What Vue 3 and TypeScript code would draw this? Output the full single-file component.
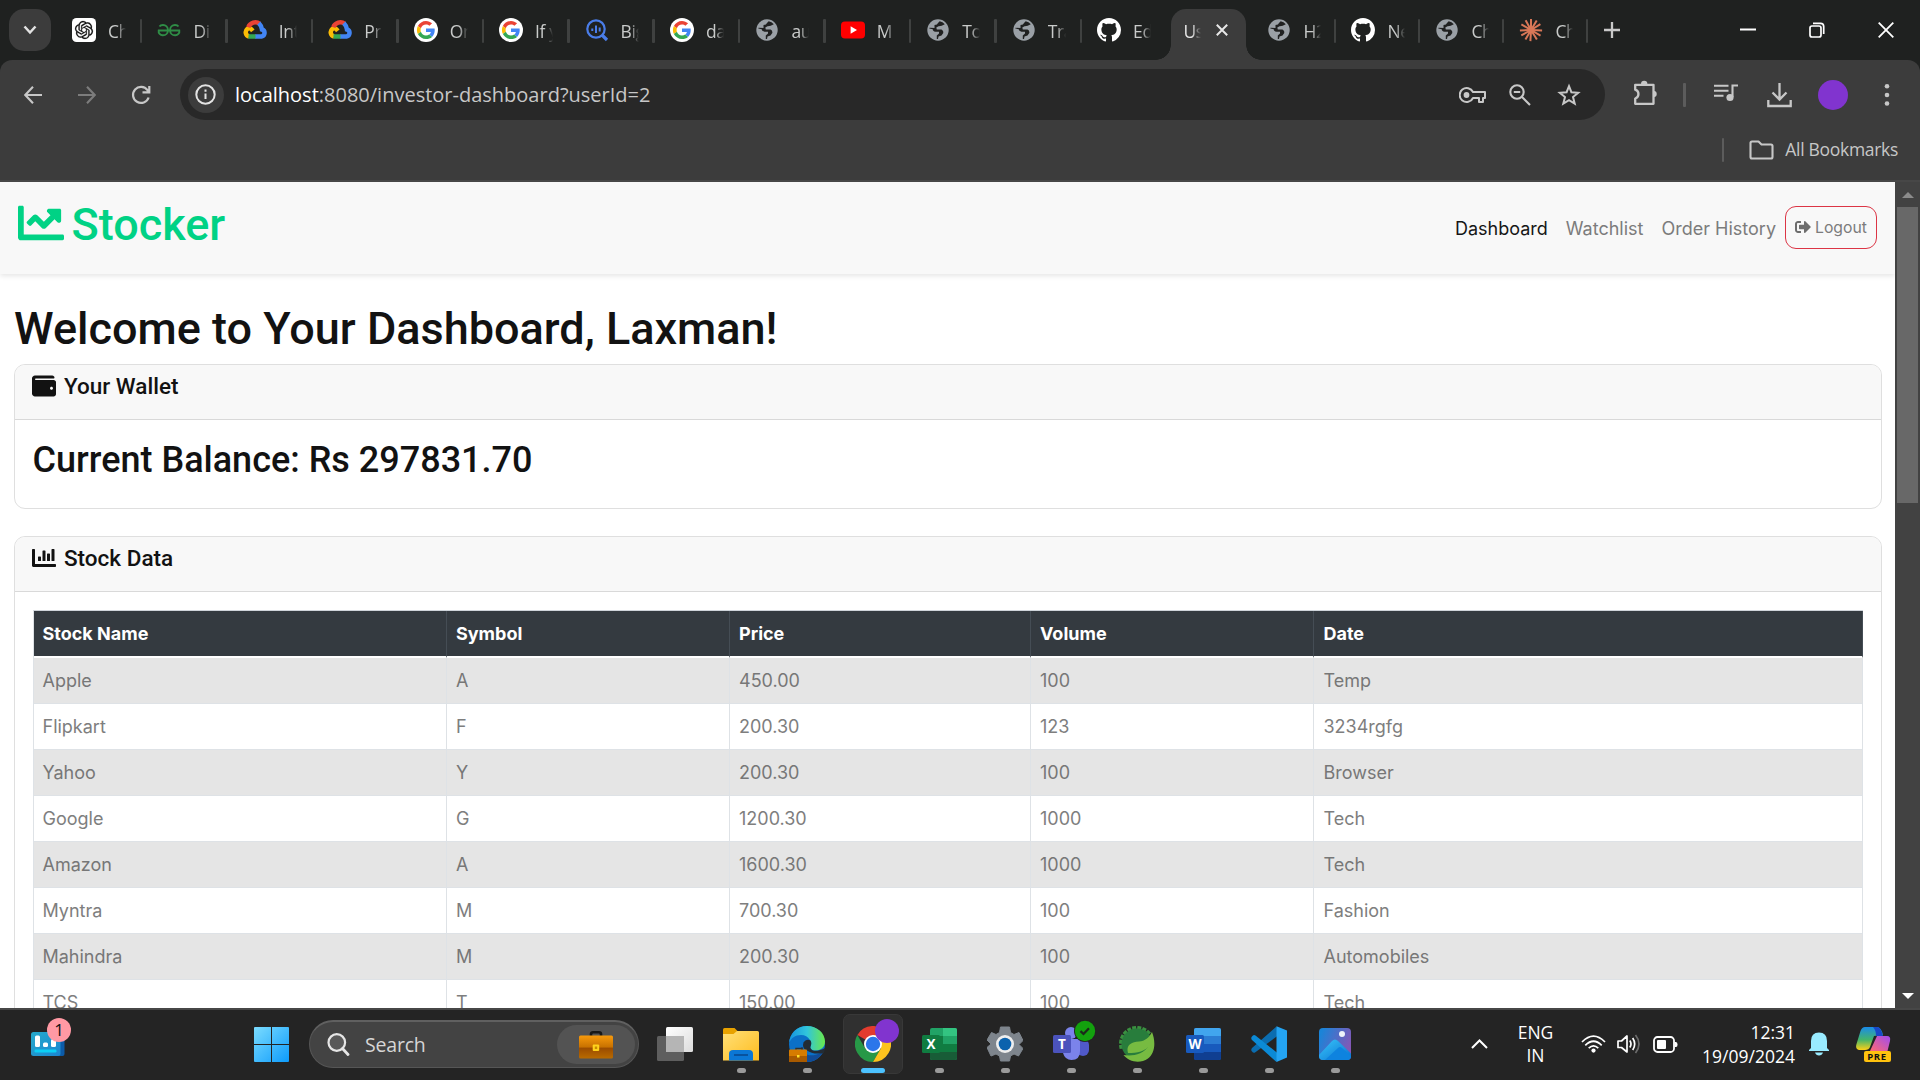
<script setup lang="ts">
interface Tab { icon: string; label: string; sep: boolean; active?: boolean; narrow?: boolean }
interface Stock { name: string; symbol: string; price: string; volume: string; date: string }

const tabs: Tab[] = [
  { icon: 'openai', label: 'Ch', sep: true },
  { icon: 'gfg', label: 'Di', sep: true },
  { icon: 'cloud', label: 'Int', sep: true },
  { icon: 'cloud', label: 'Pr', sep: true },
  { icon: 'google', label: 'On', sep: true },
  { icon: 'google', label: 'If y', sep: true },
  { icon: 'bigquery', label: 'Big', sep: true },
  { icon: 'google', label: 'da', sep: true },
  { icon: 'globe', label: 'au', sep: true },
  { icon: 'youtube', label: 'M', sep: true },
  { icon: 'globe', label: 'To', sep: true },
  { icon: 'globe', label: 'Tra', sep: true },
  { icon: 'github', label: 'Ed', sep: false },
  { icon: '', label: 'Us', sep: false, active: true },
  { icon: 'globe', label: 'H2', sep: true, narrow: true },
  { icon: 'github', label: 'Ne', sep: true, narrow: true },
  { icon: 'globe', label: 'Ch', sep: true, narrow: true },
  { icon: 'claude', label: 'Ch', sep: true, narrow: true },
]

const columns: string[] = ['Stock Name', 'Symbol', 'Price', 'Volume', 'Date']

const stocks: Stock[] = [
  { name: 'Apple', symbol: 'A', price: '450.00', volume: '100', date: 'Temp' },
  { name: 'Flipkart', symbol: 'F', price: '200.30', volume: '123', date: '3234rgfg' },
  { name: 'Yahoo', symbol: 'Y', price: '200.30', volume: '100', date: 'Browser' },
  { name: 'Google', symbol: 'G', price: '1200.30', volume: '1000', date: 'Tech' },
  { name: 'Amazon', symbol: 'A', price: '1600.30', volume: '1000', date: 'Tech' },
  { name: 'Myntra', symbol: 'M', price: '700.30', volume: '100', date: 'Fashion' },
  { name: 'Mahindra', symbol: 'M', price: '200.30', volume: '100', date: 'Automobiles' },
  { name: 'TCS', symbol: 'T', price: '150.00', volume: '100', date: 'Tech' },
]

const apps: string[] = ['taskview', 'explorer', 'edge', 'chrome', 'excel', 'settings', 'teams', 'spring', 'word', 'vscode', 'photos']
const rays: number[] = [0, 31, 58, 92, 121, 148, 183, 210, 241, 268, 300, 331]
const springTeeth: number[] = [170, 188, 206, 224, 242, 260, 278, 296, 314]
</script>

<template>
  <div class="screen">
    <header class="tabstrip">
      <div class="tab-search">
        <svg width="14" height="10" viewBox="0 0 14 10"><path d="M1.5 1.5 7 7.5 12.500 1.500" fill="none" stroke="#e3e3e3" stroke-width="2.500" /></svg>
      </div>
      <div v-for="(t, i) in tabs" :key="i" class="tab" :class="{ active: t.active, narrow: t.narrow, sep: t.sep }">
        <svg v-if="t.icon === 'openai'" class="fav" viewBox="0 0 24 24"><rect width="24" height="24" rx="4.500" fill="#fff" /><path transform="translate(3 3) scale(.75)" fill="#111" stroke="#111" stroke-width=".3" d="M22.2819 9.8211a5.9847 5.9847 0 0 0-.5157-4.9108 6.0462 6.0462 0 0 0-6.5098-2.9A6.0651 6.0651 0 0 0 4.9807 4.1818a5.9847 5.9847 0 0 0-3.9977 2.9 6.0462 6.0462 0 0 0 .7427 7.0966 5.98 5.98 0 0 0 .511 4.9107 6.051 6.051 0 0 0 6.5146 2.9001A5.9847 5.9847 0 0 0 13.2599 24a6.0557 6.0557 0 0 0 5.7718-4.2058 5.9894 5.9894 0 0 0 3.9977-2.9001 6.0557 6.0557 0 0 0-.7475-7.0729zm-9.022 12.6081a4.4755 4.4755 0 0 1-2.8764-1.0408l.1419-.0804 4.7783-2.7582a.7948.7948 0 0 0 .3927-.6813v-6.7369l2.02 1.1686a.071.071 0 0 1 .038.052v5.5826a4.504 4.504 0 0 1-4.4945 4.4944zm-9.6607-4.1254a4.4708 4.4708 0 0 1-.5346-3.0137l.142.0852 4.783 2.7582a.7712.7712 0 0 0 .7806 0l5.8428-3.3685v2.3324a.0804.0804 0 0 1-.0332.0615L9.74 19.9502a4.4992 4.4992 0 0 1-6.1408-1.6464zM2.3408 7.8956a4.485 4.485 0 0 1 2.3655-1.9728V11.6a.7664.7664 0 0 0 .3879.6765l5.8144 3.3543-2.0201 1.1685a.0757.0757 0 0 1-.071 0l-4.8303-2.7865A4.504 4.504 0 0 1 2.3408 7.872zm16.5963 3.8558L13.1038 8.364 15.1192 7.2a.0757.0757 0 0 1 .071 0l4.8303 2.7913a4.4944 4.4944 0 0 1-.6765 8.1042v-5.6772a.79.79 0 0 0-.407-.667zm2.0107-3.0231l-.142-.0852-4.7735-2.7818a.7759.7759 0 0 0-.7854 0L9.409 9.2297V6.8974a.0662.0662 0 0 1 .0284-.0615l4.8303-2.7866a4.4992 4.4992 0 0 1 6.6802 4.66zM8.3065 12.863l-2.02-1.1638a.0804.0804 0 0 1-.038-.0567V6.0742a4.4992 4.4992 0 0 1 7.3757-3.4537l-.142.0805L8.704 5.459a.7948.7948 0 0 0-.3927.6813zm1.0976-2.3654l2.602-1.4998 2.6069 1.4998v2.9994l-2.5974 1.4997-2.6067-1.4997Z" /></svg>
        <svg v-else-if="t.icon === 'gfg'" class="fav" viewBox="0 0 24 24" fill="none" stroke="#2f8d46" stroke-width="1.900"><path d="M2.500 8.500Q3.500 7 6 7a4.800 5 0 0 1 0 10.300 4 4 0 0 1-4.300-4.800H22.300A4 4 0 0 1 18 17.300 4.800 5 0 0 1 18 7Q20.500 7 21.500 8.500" /></svg>
        <svg v-else-if="t.icon === 'cloud'" class="fav" viewBox="0 0 24 24" fill="none" stroke-width="4.500"><path d="M6 18.500A4.300 4.300 0 0 1 4.300 11Q7 9 9.800 12.800" stroke="#fbbc04" /><path d="M5.300 9.200A7.500 7.500 0 0 1 16.800 5.800" stroke="#ea4335" /><path d="M15.800 5.200Q18.700 8 19 11.500A3.600 3.600 0 0 1 18.500 18.500H12" stroke="#4285f4" /><path d="M12.500 18.500H5.500" stroke="#34a853" /></svg>
        <svg v-else-if="t.icon === 'google'" class="fav" viewBox="0 0 24 24"><circle cx="12" cy="12" r="12" fill="#fff" /><g transform="translate(2.900 2.900) scale(.379)"><path fill="#EA4335" d="M24 9.500c3.540 0 6.710 1.220 9.210 3.600l6.850-6.850C35.900 2.380 30.470 0 24 0 14.620 0 6.510 5.380 2.560 13.220l7.980 6.190C12.430 13.720 17.740 9.500 24 9.500z" /><path fill="#4285F4" d="M46.980 24.550c0-1.570-.15-3.090-.38-4.550H24v9.020h12.940c-.58 2.960-2.260 5.480-4.780 7.180l7.730 6c4.510-4.180 7.090-10.360 7.090-17.650z" /><path fill="#FBBC05" d="M10.530 28.590c-.48-1.450-.76-2.990-.76-4.590s.27-3.140.76-4.590l-7.980-6.190C.92 16.460 0 20.120 0 24c0 3.880.92 7.540 2.560 10.780l7.970-6.190z" /><path fill="#34A853" d="M24 48c6.480 0 11.930-2.130 15.890-5.810l-7.730-6c-2.150 1.450-4.920 2.300-8.160 2.300-6.260 0-11.570-4.220-13.470-9.910l-7.980 6.190C6.510 42.620 14.620 48 24 48z" /></g></svg>
        <svg v-else-if="t.icon === 'bigquery'" class="fav" viewBox="0 0 24 24" fill="none" stroke="#4a7de8"><circle cx="11" cy="11" r="8.700" stroke-width="2.200" /><path d="M17 17 22 22" stroke-width="3.200" /><path d="M7.300 10.500V13M11 7.500V15M14.700 9.500V13.500" stroke-width="2" /></svg>
        <svg v-else-if="t.icon === 'globe'" class="fav" viewBox="0 0 24 24"><circle cx="12" cy="12" r="10.700" fill="#9aa0a6" /><path d="M13.800 3.300 13.800 6.300Q13.500 7.800 11.500 7.800H9.700V10Q9.700 11.500 8.300 11.700H13Q14.800 11.700 14.800 13.500V15.500Q14.500 16.800 13 16.900 11.300 17 11.300 18.500V20.900C6 20.500 3.200 16.500 3.100 12.700L7.300 16.300H10.500L11.500 14 5.500 11.500 3.600 9.500" fill="none" /><path d="M13.700 3.300A9 9 0 0 1 18.800 6.200Q15.500 8.300 12.500 8.200L10.300 9.500 10.800 11.500H15.500Q17.800 12.500 17.300 15L15.500 17.500 12.500 18.500 12 20.900H10.800V17.500L13 15.500V13.800H9.500Q6.500 13 6.800 11.200L3.300 10.500A9 9 0 0 1 3.500 9.800L8.500 10 8.500 7Q11.500 7 12 5Z" fill="#202121" /><path d="M3.300 13.500Q5.500 14 6.500 16.500L9.500 17.500V20.600A9 9 0 0 1 3.300 13.500Z" fill="#9aa0a6" /></svg>
        <svg v-else-if="t.icon === 'youtube'" class="fav" viewBox="0 0 24 24"><rect y="3.500" width="24" height="17" rx="4" fill="#f00" /><path d="M9.600 8.300V15.700L16 12Z" fill="#fff" /></svg>
        <svg v-else-if="t.icon === 'github'" class="fav" viewBox="0 0 16 16"><path fill="#fff" d="M8 0C3.580 0 0 3.580 0 8c0 3.540 2.290 6.530 5.470 7.590.4.070.55-.17.55-.38 0-.19-.01-.82-.01-1.490-2.010.37-2.530-.49-2.690-.94-.09-.23-.48-.94-.82-1.130-.28-.15-.68-.52-.01-.53.63-.01 1.080.58 1.230.82.72 1.210 1.870.87 2.330.66.07-.52.28-.87.51-1.070-1.780-.2-3.640-.89-3.640-3.950 0-.87.31-1.590.82-2.150-.08-.2-.36-1.020.08-2.120 0 0 .67-.21 2.200.82.640-.18 1.320-.27 2-.27s1.360.09 2 .27c1.530-1.040 2.200-.82 2.200-.82.44 1.100.16 1.920.08 2.120.51.56.82 1.270.82 2.150 0 3.070-1.870 3.750-3.650 3.950.29.25.54.73.54 1.480 0 1.070-.01 1.930-.01 2.200 0 .21.15.46.55.38A8.010 8.010 0 0 0 16 8c0-4.420-3.580-8-8-8z" /></svg>
        <svg v-else-if="t.icon === 'claude'" class="fav" viewBox="0 0 24 24"><path v-for="r in rays" :key="r" d="M12 12V.900" :transform="`rotate(${r} 12 12)`" stroke="#d97757" stroke-width="2" /><circle cx="12" cy="12" r="3.500" fill="#d97757" /></svg>
        <span class="tab-label">{{ t.label }}</span>
        <svg v-if="t.active" class="tab-close" viewBox="0 0 12 12"><path d="M.800.800 11.200 11.200M11.200.800.800 11.200" stroke="#e8e8e8" stroke-width="2" /></svg>
      </div>
      <svg class="new-tab" viewBox="0 0 16 16"><path d="M8 0V16M0 8H16" stroke="#c9c9c9" stroke-width="2.300" /></svg>
      <div class="win-controls">
        <svg width="16" height="16" viewBox="0 0 16 16"><path d="M0 7.500H16" stroke="#fff" stroke-width="2" /></svg>
        <svg width="16" height="16" viewBox="0 0 16 16" fill="none" stroke="#fff" stroke-width="1.700"><rect x="1" y="4" width="11" height="11" rx="2" /><path d="M4 1.300H11.500Q14.700 1.300 14.700 4.500V12" /></svg>
        <svg width="16" height="16" viewBox="0 0 16 16"><path d="M.700.700 15.300 15.300M15.300.700.700 15.300" stroke="#fff" stroke-width="1.800" /></svg>
      </div>
    </header>

    <section class="chrome-bars">
      <div class="toolbar">
        <svg class="back" width="18" height="18" viewBox="0 0 18 18" fill="none" stroke="#c7c7c7" stroke-width="2.100"><path d="M18 9H1.500M9 .800 1.300 9 9 17.200" /></svg>
        <svg class="forward" width="18" height="18" viewBox="0 0 18 18" fill="none" stroke="#7c7c7c" stroke-width="2.100"><path d="M0 9H16.500M9 .800 16.700 9 9 17.200" /></svg>
        <svg class="reload" width="20" height="20" viewBox="0 0 20 20" fill="none" stroke="#c7c7c7" stroke-width="2.200"><path d="M17.600 12.500A8 8 0 1 1 16.500 5.200L18 7M18.300 1V7.400H11.500" /></svg>
        <div class="omnibox">
          <div class="info"><svg width="21" height="21" viewBox="0 0 21 21" fill="none" stroke="#e3e3e3" stroke-width="2"><circle cx="10.500" cy="10.500" r="9.200" /><path d="M10.500 9.500V15M10.500 5.500V7.700" /></svg></div>
          <span class="url"><b>localhost</b>:8080/investor-dashboard?userId=2</span>
          <svg class="key" width="27" height="18" viewBox="0 0 27 18" fill="none" stroke="#c7c7c7" stroke-width="2"><path d="M14 6H26V12H24V16H20V12H14A7 7 0 1 1 14 6Z" stroke-linejoin="round" /><circle cx="7.500" cy="9" r="2.900" fill="#c7c7c7" stroke="none" /></svg>
          <svg class="lens" width="22" height="22" viewBox="0 0 22 22" fill="none" stroke="#c7c7c7" stroke-width="2.100"><circle cx="8" cy="8" r="6.700" /><path d="M12.800 12.800 21 21M4.800 8H11.200" /></svg>
          <svg class="star" width="24" height="24" viewBox="0 0 24 24" fill="none" stroke="#c7c7c7" stroke-width="2"><path d="M12 3.200 14.400 9.200 21.200 9.700 16 14 17.700 20.600 12 17.100 6.300 20.600 8 14 2.800 9.700 9.600 9.200Z" /></svg>
        </div>
        <svg class="puzzle" width="25" height="26" viewBox="0 0 25 26"><path d="M2.200 4.800H20.500V23.800H2.200V18.500A4.600 4.600 0 0 0 2.200 9.700Z" fill="none" stroke="#c7c7c7" stroke-width="2.300" stroke-linejoin="round" /><path d="M8 4A3.200 3.200 0 0 1 14.400 4ZM21 10.800A3.300 3.300 0 0 1 21 17.300Z" fill="#c7c7c7" /></svg>
        <i class="bar-sep"></i>
        <svg class="queue" width="24" height="18" viewBox="0 0 24 18"><path d="M0 1.800H14.500M0 6.800H14.500M0 11.800H9.500M18.500 13V1.500H24" fill="none" stroke="#c7c7c7" stroke-width="2.100" /><circle cx="16" cy="13.500" r="3.600" fill="#c7c7c7" /></svg>
        <svg class="download" width="25" height="26" viewBox="0 0 25 26" fill="none" stroke="#c7c7c7" stroke-width="2.300"><path d="M12.500 1V17M5.500 10.500 12.500 17.500 19.500 10.500M1.300 18V24H23.700V18" /></svg>
        <i class="avatar"></i>
        <svg class="kebab" width="6" height="24" viewBox="0 0 6 24" fill="#c7c7c7"><circle cx="3" cy="3.300" r="2.300" /><circle cx="3" cy="12" r="2.300" /><circle cx="3" cy="20.500" r="2.300" /></svg>
      </div>
      <div class="bookmarks">
        <i class="bm-sep"></i>
        <svg width="25" height="20" viewBox="0 0 25 20" fill="none" stroke="#c7c7c7" stroke-width="2.100"><path d="M3 1.500H9.500L12.500 4.500H22Q23.500 4.500 23.500 6V17Q23.500 18.500 22 18.500H3Q1.500 18.500 1.500 17V3Q1.500 1.500 3 1.500Z" stroke-linejoin="round" /></svg>
        <span>All Bookmarks</span>
      </div>
    </section>

    <main class="viewport">
      <div class="page">
        <nav class="navbar">
          <div class="brand">
            <svg width="46" height="46" viewBox="0 0 512 512"><path fill="currentColor" d="M496 384H64V80c0-8.840-7.160-16-16-16H16C7.160 64 0 71.160 0 80v336c0 17.670 14.330 32 32 32h464c8.840 0 16-7.160 16-16v-32c0-8.840-7.160-16-16-16zM464 96H345.940c-21.380 0-32.090 25.850-16.970 40.970l32.400 32.400L288 242.750l-73.370-73.370c-12.500-12.500-32.760-12.500-45.250 0l-68.690 68.690c-6.250 6.250-6.250 16.380 0 22.630l22.620 22.620c6.250 6.250 16.380 6.250 22.630 0L192 237.250l73.370 73.370c12.500 12.500 32.760 12.500 45.250 0l96-96 32.400 32.400c15.120 15.120 40.970 4.410 40.970-16.970V112c.01-8.840-7.150-16-15.990-16z" /></svg>
            <span>Stocker</span>
          </div>
          <div class="links">
            <a class="current">Dashboard</a><a>Watchlist</a><a class="hist">Order History</a>
            <button class="logout"><svg width="16" height="16" viewBox="0 0 512 512"><path fill="currentColor" d="M497 273L329 441c-15 15-41 4.500-41-17v-96H152c-13.300 0-24-10.700-24-24v-96c0-13.300 10.700-24 24-24h136V88c0-21.400 25.900-32 41-17l168 168c9.300 9.400 9.300 24.600 0 34zM192 436v-40c0-6.600-5.400-12-12-12H96c-17.700 0-32-14.300-32-32V160c0-17.700 14.300-32 32-32h84c6.600 0 12-5.400 12-12V76c0-6.600-5.400-12-12-12H96c-53 0-96 43-96 96v192c0 53 43 96 96 96h84c6.600 0 12-5.400 12-12z" /></svg><span>Logout</span></button>
          </div>
        </nav>
        <div class="container">
          <h1>Welcome to Your Dashboard, Laxman!</h1>
          <section class="card wallet">
            <div class="card-header">
              <svg width="24" height="24" viewBox="0 0 512 512"><path fill="currentColor" d="M461.200 128H80c-8.840 0-16-7.160-16-16s7.160-16 16-16h384c8.840 0 16-7.160 16-16 0-26.510-21.490-48-48-48H64C28.650 32 0 60.650 0 96v320c0 35.350 28.650 64 64 64h397.200c28.020 0 50.800-21.530 50.800-48V176c0-26.470-22.780-48-50.800-48zM416 336c-17.670 0-32-14.330-32-32s14.330-32 32-32 32 14.330 32 32-14.330 32-32 32z" /></svg>
              <h5>Your Wallet</h5>
            </div>
            <h2>Current Balance: Rs 297831.70</h2>
          </section>
          <section class="card data">
            <div class="card-header">
              <svg width="24" height="24" viewBox="0 0 512 512"><path fill="currentColor" d="M332.800 320h38.400c6.400 0 12.800-6.400 12.800-12.800V172.800c0-6.400-6.400-12.800-12.800-12.800h-38.400c-6.400 0-12.800 6.400-12.800 12.800v134.400c0 6.400 6.400 12.800 12.800 12.800zm96 0h38.400c6.400 0 12.800-6.400 12.800-12.800V76.800c0-6.400-6.400-12.800-12.800-12.800h-38.400c-6.400 0-12.800 6.400-12.800 12.800v230.400c0 6.400 6.400 12.800 12.800 12.800zm-288 0h38.400c6.400 0 12.800-6.400 12.800-12.800v-70.400c0-6.400-6.400-12.800-12.800-12.800h-38.400c-6.400 0-12.800 6.400-12.800 12.800v70.400c0 6.400 6.400 12.800 12.800 12.800zm96 0h38.400c6.400 0 12.800-6.400 12.800-12.800V108.800c0-6.400-6.400-12.800-12.800-12.800h-38.400c-6.400 0-12.800 6.400-12.800 12.800v198.400c0 6.400 6.400 12.800 12.800 12.800zM496 384H64V80c0-8.840-7.160-16-16-16H16C7.160 64 0 71.160 0 80v336c0 17.670 14.330 32 32 32h464c8.840 0 16-7.160 16-16v-32c0-8.840-7.160-16-16-16z" /></svg>
              <h5>Stock Data</h5>
            </div>
            <table>
              <colgroup><col class="c1" /><col class="c2" /><col class="c3" /><col class="c4" /><col class="c5" /></colgroup>
              <thead><tr><th v-for="c in columns" :key="c">{{ c }}</th></tr></thead>
              <tbody>
                <tr v-for="s in stocks" :key="s.name">
                  <td>{{ s.name }}</td><td>{{ s.symbol }}</td><td>{{ s.price }}</td><td>{{ s.volume }}</td><td>{{ s.date }}</td>
                </tr>
              </tbody>
            </table>
          </section>
        </div>
      </div>
      <aside class="scrollbar">
        <svg width="12" height="6" viewBox="0 0 12 6"><path d="M6 0 12 6H0Z" fill="#8b8b8b" /></svg>
        <i class="thumb"></i>
        <svg class="down" width="12" height="6" viewBox="0 0 12 6"><path d="M6 6 12 0H0Z" fill="#fff" /></svg>
      </aside>
    </main>

    <footer class="taskbar">
      <div class="widget">
        <svg width="34" height="25" viewBox="0 0 34 25"><defs><linearGradient id="wg" x1="0" y1="0" x2="1" y2="1"><stop offset="0" stop-color="#27aacb" /><stop offset="1" stop-color="#1b86d1" /></linearGradient></defs><rect x="20" width="13.500" height="24" rx="2" fill="#0c5ba8" /><rect width="29.500" height="24" rx="2.500" fill="url(#wg)" /><rect x="4" y="3.500" width="5" height="11.500" rx="1.500" fill="#fff" /><rect x="12" y="10.500" width="5" height="4.500" rx="1.500" fill="#fff" /><rect x="20" y="7" width="5" height="8" rx="1.500" fill="#fff" /><rect x="3.500" y="17.500" width="22" height="3" rx="1.200" fill="#0bd0f5" /></svg>
        <span class="count">1</span>
      </div>
      <svg class="start" width="35" height="35" viewBox="0 0 35 35"><defs><linearGradient id="st" x1="0" y1="0" x2="1" y2="1"><stop offset="0" stop-color="#7bdcff" /><stop offset="1" stop-color="#0d9bfb" /></linearGradient></defs><path fill="url(#st)" d="M1 0H17V17H0V1Q0 0 1 0ZM18 0H34Q35 0 35 1V17H18ZM0 18H17V35H1Q0 35 0 34ZM18 18H35V34Q35 35 34 35H18Z" /></svg>
      <div class="search">
        <svg width="23" height="23" viewBox="0 0 23 23" fill="none" stroke="#e6e6e6"><circle cx="9.800" cy="9.500" r="8.300" fill="#595959" stroke-width="2.200" /><path d="M15.500 15.500 21 21.500" stroke-width="2.800" stroke-linecap="round" /></svg>
        <span>Search</span>
        <div class="highlight">
          <svg width="34" height="28" viewBox="0 0 34 28"><defs><linearGradient id="bc" x1="0" y1="0" x2="0" y2="1"><stop offset="0" stop-color="#f79a0c" /><stop offset=".5" stop-color="#c87200" /><stop offset=".55" stop-color="#9b4c00" /><stop offset="1" stop-color="#b96b00" /></linearGradient></defs><path d="M12 5V3Q12 1.300 14 1.300H20Q22 1.300 22 3V5" fill="none" stroke="#171717" stroke-width="2.600" /><rect y="4.500" width="34" height="23" rx="1.500" fill="url(#bc)" /><rect x="13.700" y="13.500" width="6.500" height="6.500" rx="1" fill="#ffd21c" /><rect x="15.800" y="15.500" width="2.400" height="2.500" fill="#c78b00" /></svg>
        </div>
      </div>
      <div class="apps">
        <div v-for="a in apps" :key="a" class="app" :class="{ focused: a === 'chrome' }">
          <svg v-if="a === 'taskview'" class="ai" viewBox="0 0 36 36"><defs><linearGradient id="tv" x1="0" y1="0" x2="1" y2="1"><stop offset="0" stop-color="#fff" /><stop offset="1" stop-color="#dcdcdc" /></linearGradient></defs><rect x="9" y="1" width="27" height="25" rx="1.500" fill="url(#tv)" /><rect y="10" width="27" height="25" rx="1.500" fill="#5e5e5e" /><rect x="9" y="10" width="18" height="16" fill="#b5b5b5" /></svg>
          <svg v-else-if="a === 'explorer'" class="ai" viewBox="0 0 36 36"><defs><linearGradient id="ex" x1="0" y1="0" x2="1" y2="1"><stop offset="0" stop-color="#ffe078" /><stop offset="1" stop-color="#ffbc1e" /></linearGradient></defs><path d="M0 3.500Q0 2 1.500 2H11.500L15 5.500V10H0Z" fill="#e8a200" /><path d="M0 8H10.500L14 5H34.500Q36 5 36 6.500V34.500H0Z" fill="url(#ex)" /><path d="M6 34.500V28Q6 24 10 24H26Q30 24 30 28V34.500Z" fill="#0b77d5" /><path d="M11 29H25" stroke="#084e98" stroke-width="1.800" /></svg>
          <svg v-else-if="a === 'edge'" class="ai" viewBox="0 0 36 36"><defs><linearGradient id="eg" x1="0" y1="0" x2="1" y2="0"><stop offset="0" stop-color="#1693df" /><stop offset=".5" stop-color="#31c5dc" /><stop offset="1" stop-color="#6ae94b" /></linearGradient></defs><circle cx="18" cy="18" r="18" fill="#0b70c7" /><path d="M0 17C1 7 8 0 18 0 28 0 36 7 36 15.500 36 21 32 24.500 27 24.500 22.500 24.500 20.500 22.500 21.500 20.500 24 17 20 9 12 9 6 9 2 12 0 17Z" fill="url(#eg)" /><path d="M14 21C14 28 20 33 34 26 31 32 25 36 18 36Q11 34 12 21Z" fill="#114c98" /><path d="M14 19A5 5 0 0 1 21.500 14.500C23.500 18 21 20 21.500 22 23 26 30 25.500 36 22L35 27Q24 29 18 24.500 14 23 14 19Z" fill="#232c35" /><path d="M7 24V22.500H13V24" fill="none" stroke="#31302d" stroke-width="1.500" /><rect y="23.500" width="18" height="12.500" rx=".8" fill="#d67c00" /><rect y="30" width="18" height="6" fill="#a85a00" /><rect x="8" y="29" width="2.500" height="2.500" fill="#ffe227" /></svg>
          <svg v-else-if="a === 'chrome'" class="ai" viewBox="0 0 36 36"><path d="M18 18 2.400 9A18 18 0 0 1 33.600 9Z" fill="#e33b2e" /><path d="M2.400 9A18 18 0 0 0 18 36L25.800 22.500H10.200Z" fill="#279847" /><path d="M33.600 9H18L25.800 22.500 18 36A18 18 0 0 0 33.600 9Z" fill="#fcc31e" /><circle cx="18" cy="18" r="9" fill="#fff" /><circle cx="18" cy="18" r="7.200" fill="#2b76ea" /></svg>
          <svg v-else-if="a === 'excel'" class="ai" viewBox="0 0 36 36"><rect x="9" y="2" width="27" height="32" rx="2" fill="#21a366" /><path d="M22 2H34Q36 2 36 4V10H22Z" fill="#33c481" /><path d="M9 10H22V18H9Z" fill="#107c41" /><path d="M22 10H36V18H22Z" fill="#21a366" /><path d="M9 18H36V26H9Z" fill="#107c41" /><path d="M9 26H36V32Q36 34 34 34H11Q9 34 9 32Z" fill="#185c37" /><rect x="1" y="9" width="18" height="18" rx="1.500" fill="#107c41" /><text x="10" y="22.700" text-anchor="middle" class="letter">X</text></svg>
          <svg v-else-if="a === 'settings'" class="ai" viewBox="0 0 36 36"><path d="M13.500 1H22.500L23.500 6.500 27 8.500 32 6.500 36 14.500 32 18.500 36 22.500 31.500 30 27 28 23.500 30 22.500 35H13.500L12.500 30 9 28 4 30 0 21.500 4 18 0 14 4.500 6.500 9 8.500 12.500 6.500Z" fill="#7e858d" stroke="#7e858d" stroke-linejoin="round" /><circle cx="18" cy="18" r="9" fill="#eee" /><circle cx="18" cy="18" r="6.300" fill="#0b62ad" /></svg>
          <svg v-else-if="a === 'teams'" class="ai" viewBox="0 0 36 36"><circle cx="30" cy="9" r="4" fill="#5059c9" /><rect x="24" y="13" width="12" height="17" rx="6" fill="#5059c9" /><circle cx="18" cy="7" r="6" fill="#7b83eb" /><path d="M10 13H27V25Q27 34 18.500 34 12 34 10 27Z" fill="#7b83eb" /><rect y="9" width="18" height="18" rx="1.500" fill="#4b53bc" /><text x="9" y="22.700" text-anchor="middle" class="letter">T</text></svg>
          <svg v-else-if="a === 'spring'" class="ai" viewBox="0 0 36 36"><g fill="#3a9140"><rect v-for="r in springTeeth" :key="r" x="32" y="16" width="4" height="4" :transform="`rotate(${r} 18 18)`" /></g><circle cx="18" cy="18" r="15.500" fill="#287d3c" /><path d="M33 6C37 16 36 27 29 32.500 21 38 10 36 4.500 29 12 30 24 30 31 18 27 26 18 27 9 27 7 20 11 16 20 15.500 26 15 30 12 33 6Z" fill="#77bb41" /></svg>
          <svg v-else-if="a === 'word'" class="ai" viewBox="0 0 36 36"><rect x="9" y="2" width="27" height="32" rx="2" fill="#185abd" /><path d="M9 10V4Q9 2 11 2H34Q36 2 36 4V10Z" fill="#41a5ee" /><path d="M9 10H36V18H9Z" fill="#2b7cd3" /><path d="M9 26H36V32Q36 34 34 34H11Q9 34 9 32Z" fill="#103f91" /><rect x="1" y="9" width="18" height="18" rx="1.500" fill="#185abd" /><text x="10" y="22.700" text-anchor="middle" class="letter">W</text></svg>
          <svg v-else-if="a === 'vscode'" class="ai" viewBox="0 0 36 36"><path d="M1 22 25.500.500 27 9.500 4 26.500Q2.500 27.500 1 25.500-.500 24 1 22Z" fill="#0b6db0" /><path d="M1 10.500Q2.500 8 4.500 9.500L27 27.500 25.500 36 1 14Q-.500 12 1 10.500Z" fill="#0b8ad6" /><path d="M25.500.200 36 4.500V31.500L25.500 36Z" fill="#24a4f2" /></svg>
          <svg v-else class="ai" viewBox="0 0 36 36"><defs><linearGradient id="ph" x1="0" y1=".3" x2="1" y2=".7"><stop offset="0" stop-color="#1a84d8" /><stop offset="1" stop-color="#8a55b4" /></linearGradient><linearGradient id="pm" x1="0" y1="0" x2="1" y2="1"><stop offset="0" stop-color="#38c6fa" /><stop offset="1" stop-color="#0a72d2" /></linearGradient></defs><rect x="2" y="2" width="32" height="32" rx="4" fill="url(#ph)" /><path d="M2 29 15 15Q18 12 21 15L34 27.500V30Q34 34 30 34H6Q2 34 2 30Z" fill="url(#pm)" /><path d="M8 34 21 22Q23 20 25 22L34 30Q34 34 30 34Z" fill="#0e83df" /><circle cx="25" cy="8" r="3" fill="#eef3fa" /></svg>
          <i v-if="a === 'chrome'" class="profile"></i>
          <svg v-if="a === 'teams'" class="status" viewBox="0 0 22 22"><circle cx="11" cy="11" r="11" fill="#232323" /><circle cx="11" cy="11" r="10.200" fill="#13a10e" /><path d="M6.500 11.200 9.500 14 15 8.200" fill="none" stroke="#1c2a1b" stroke-width="2.300" /></svg>
          <i v-if="a !== 'taskview'" class="running"></i>
        </div>
      </div>
      <div class="tray">
        <svg class="chev" width="17" height="10" viewBox="0 0 17 10"><path d="M1 9 8.500 1.500 16 9" fill="none" stroke="#fff" stroke-width="2" /></svg>
        <div class="lang"><span>ENG</span><span>IN</span></div>
        <svg class="wifi" width="25" height="18" viewBox="0 0 25 18" fill="none" stroke="#fff" stroke-width="1.700"><path d="M1 7Q12.500-4.500 24 7M4.300 10.300Q12.500 2.200 20.700 10.300M7.700 13.200Q12.500 8.600 17.300 13.200" /><circle cx="12.500" cy="15.600" r="2.100" fill="#fff" stroke="none" /></svg>
        <svg class="vol" width="25" height="20" viewBox="0 0 25 20" fill="none" stroke="#fff" stroke-width="1.700"><path d="M1 7H4.500L10 2V18L4.500 13.500H1Z" stroke-linejoin="round" /><path d="M12.800 6.500Q15.200 10 12.800 13.500M15.700 4Q19.700 10 15.700 16" /><path d="M18.500 1Q25.500 10 18.500 19" stroke="#6c6c6c" /></svg>
        <svg class="batt" width="25" height="17" viewBox="0 0 25 17"><rect x="1" y="1" width="20" height="15" rx="3.500" fill="none" stroke="#fff" stroke-width="1.800" /><rect x="4" y="4" width="9" height="9" rx="1" fill="#fff" /><path d="M21.500 6H23Q24.500 6 24.500 8.500T23 11H21.500Z" fill="#fff" /></svg>
        <div class="clock"><span>12:31</span><span>19/09/2024</span></div>
        <svg class="bell" width="20" height="24" viewBox="0 0 20 24" fill="#99ebff"><path d="M2 16V9Q2 .500 10 .500T18 9V16L20 18V19H0V18ZM6 20.500H14Q13 23.500 10 23.500T6 20.500Z" /></svg>
        <div class="copilot">
          <svg width="35" height="35" viewBox="0 0 35 35"><defs><linearGradient id="c1" x1="0" y1="0" x2="0" y2="1"><stop offset="0" stop-color="#1a8bea" /><stop offset=".55" stop-color="#43b56b" /><stop offset="1" stop-color="#ffd016" /></linearGradient><linearGradient id="c2" x1="1" y1="0" x2="0" y2="1"><stop offset="0" stop-color="#a04cf0" /><stop offset="1" stop-color="#ff6a70" /></linearGradient></defs><path d="M9 0H21Q25 0 27 8L18 9 14 20Q13 23 9 23H3Q-1 22 .500 17L4.500 4Q6 0 9 0Z" fill="url(#c1)" /><path d="M17 0H21Q25 0 27 9H20Q20 3 17 0Z" fill="#1848c8" /><path d="M21 9H31Q35 9 34 14L31.500 24H14Z" fill="url(#c2)" /></svg>
          <span>PRE</span>
        </div>
      </div>
    </footer>
  </div>
</template>

<style>
body { margin: 0; overflow: hidden; background: #242424; }
</style>

<style scoped>
* { box-sizing: border-box; }
svg, i { display: block; flex: none; }
.screen { width: 1920px; height: 1080px; overflow: hidden; display: flex; flex-direction: column; background: #1f2120; font-family: "Open Sans", "Noto Sans", sans-serif; }

.tabstrip { height: 60px; flex: none; display: flex; align-items: center; background: #1f2120; padding-left: 9px; }
.tab-search { width: 42px; height: 42px; margin-right: 5px; border-radius: 15px; background: #3c3c3c; display: flex; align-items: center; justify-content: center; flex: none; }
.tab { position: relative; flex: none; width: 85.430px; height: 60px; padding-left: 16px; display: flex; align-items: center; }
.tab.narrow { width: 84px; }
.tab.sep::after { content: ""; position: absolute; right: -1px; top: 19px; width: 2.500px; height: 24px; border-radius: 1px; background: #3f4140; }
.fav { width: 24px; height: 24px; }
.tab-label { flex: none; margin: 2px 0 0 12px; white-space: nowrap; font-size: 17.500px; letter-spacing: -.4px; line-height: 26px; color: #c9cbca; -webkit-mask-image: linear-gradient(90deg, #000 9px, transparent 18px); mask-image: linear-gradient(90deg, #000 9px, transparent 18px); }
.tab.active { align-self: flex-end; width: 75px; height: 51px; margin: 0 5px; padding: 0 18px 9px 12px; border-radius: 15px 15px 0 0; background: #3c3c3c; }
.tab.active::before, .tab.active::after { content: ""; position: absolute; bottom: 0; width: 15px; height: 15px; }
.tab.active::before { left: -15px; background: radial-gradient(circle at 0 0, transparent 14.500px, #3c3c3c 15px); }
.tab.active::after { right: -15px; background: radial-gradient(circle at 100% 0, transparent 14.500px, #3c3c3c 15px); }
.tab.active .tab-label { margin: 2px 0 0; color: #e6e6e6; }
.tab-close { width: 12px; height: 12px; margin-left: auto; }
.new-tab { width: 16px; height: 16px; margin-left: 17px; }
.win-controls { display: flex; gap: 53px; margin-left: auto; padding-right: 26.500px; }

.chrome-bars { height: 122px; flex: none; background: #3c3c3c; border-bottom: 2px solid #474747; border-radius: 12px 12px 0 0; }
.toolbar { height: 69px; display: flex; align-items: center; padding-left: 24px; }
.forward { margin-left: 36px; }
.reload { margin-left: 35px; }
.omnibox { width: 1425px; height: 51px; margin: 0 28px 0 29px; border-radius: 26px; background: #282828; display: flex; align-items: center; padding-left: 7.500px; }
.info { width: 36px; height: 36px; border-radius: 50%; background: #3c3c3c; display: flex; align-items: center; justify-content: center; }
.url { margin: 0 0 1px 11.500px; font-size: 20px; color: #c7c7c7; white-space: nowrap; flex: 1; letter-spacing: 0; }
.url b { font-weight: 400; color: #fff; }
.lens { margin-left: 23px; }
.star { margin: 0 24px 0 26px; }
.puzzle { margin-bottom: 3px; }
.bar-sep { width: 3px; height: 24px; border-radius: 1px; background: #5c5c5c; margin-left: 24.500px; }
.queue { margin: 0 0 3px 28px; }
.download { margin-left: 29px; }
.avatar { width: 30px; height: 30px; border-radius: 50%; background: #8134cf; margin-left: 26.500px; }
.kebab { margin-left: 36px; }
.bookmarks { height: 42px; display: flex; align-items: center; justify-content: flex-end; padding-right: 22px; font-size: 17.500px; color: #c7c7c7; }
.bookmarks .bm-sep { width: 2.500px; height: 24px; border-radius: 1px; background: #5c5c5c; margin-right: 25px; }
.bookmarks span { margin: -2px 0 0 11px; white-space: nowrap; letter-spacing: -.3px; }

.viewport { height: 826px; flex: none; display: flex; background: #fff; overflow: hidden; }
.page { width: 1895px; overflow: hidden; color: #121212; }
.navbar { height: 92px; display: flex; justify-content: space-between; background: #f8f8f8; box-shadow: 0 2px 5px rgba(0, 0, 0, .1); padding: 0 18px 0 17.500px; }
.brand { display: flex; align-items: flex-start; color: #00d285; font-family: Roboto, sans-serif; font-weight: 500; }
.brand svg { margin-top: 18px; }
.brand span { font-size: 45px; line-height: 54px; margin: 16px 0 0 8px; white-space: nowrap; }
.links { display: flex; align-items: flex-start; font-family: Inter, sans-serif; font-weight: 400; font-size: 18px; color: #7c7c7c; padding-top: 24px; }
.links a { line-height: 27px; margin: 9px 18px 0 0; white-space: nowrap; }
.links .current { color: #161616; }
.links .hist { margin-right: 9px; }
.logout { width: 92px; height: 43px; padding: 0 0 0 9px; display: flex; align-items: flex-start; background: none; border: 1px solid #dc3545; border-radius: 11px; font: 400 15.750px/24px Inter, sans-serif; color: #7c7c7c; }
.logout svg { margin: 12px 4px 0 0; color: #6d6d6d; }
.logout span { margin-top: 9px; }
.container { padding: 0 13px 0 14px; }
h1, h2, h5 { margin: 0; font-family: Roboto, sans-serif; font-weight: 500; white-space: nowrap; }
h1 { font-size: 45px; line-height: 54px; padding-top: 28px; height: 90px; }
.card { border: 1px solid #dfdfdf; border-radius: 11px; overflow: hidden; }
.card-header { height: 55px; display: flex; align-items: flex-start; background: #f8f8f8; border-bottom: 1px solid #d9d9d9; padding: 9px 0 0 17px; }
.card-header h5 { font-size: 22.500px; line-height: 27px; margin: -1px 0 0 8px; }
.wallet { height: 145px; }
.wallet h2 { font-size: 36px; line-height: 43px; padding: 19px 0 0 17.500px; }
.data { margin-top: 27px; height: 600px; }

table { width: 1830px; margin: 18px 0 0 18px; table-layout: fixed; border-collapse: separate; border-spacing: 0; font-family: Inter, sans-serif; font-size: 18px; line-height: 27px; border-top: 1px solid #cfd4da; border-left: 1px solid #dee2e6; }
.c1 { width: 413px; } .c2 { width: 283px; } .c3 { width: 301px; } .c4 { width: 283px; } .c5 { width: 549px; }
th { text-align: left; height: 47px; padding: 0 0 0 9px; color: #fff; background: #343a40; background-clip: padding-box; font-weight: 700; border-right: 1px solid #454d55; border-bottom: 2px solid #fff; }
td { height: 46px; padding: 0 0 0 9px; font-weight: 400; color: #7e7e7e; border-right: 1px solid #dee2e6; border-bottom: 1px solid #dee2e6; }
th:first-child, td:first-child { padding-left: 8.500px; }
th:last-child, td:last-child { padding-left: 9.500px; }
tbody tr:nth-child(odd) td { background: #e5e5e5; color: #777; }

.scrollbar { width: 25px; display: flex; flex-direction: column; align-items: center; background: #424242; padding: 10px 0 9px; }
.thumb { width: 21px; height: 296px; margin-top: 9px; background: #686868; }
.down { margin-top: auto; }

.taskbar { height: 72px; flex: none; display: flex; align-items: center; background: #242424; border-top: 2px solid #474747; color: #fff; }
.widget { position: relative; margin: -2px 0 0 31px; width: 34px; }
.count { position: absolute; left: 16px; top: -14px; width: 24px; height: 24px; border-radius: 50%; background: #ff99a4; color: #111; font-size: 17px; line-height: 24px; text-align: center; }
.start { margin: -1px 0 0 189px; }
.search { width: 330px; height: 48px; margin: -2px 0 0 20px; border: 1px solid #565656; border-top: 2px solid #606060; border-radius: 24px; background: #434343; display: flex; align-items: center; padding: 0 3px 0 17px; }
.search span { margin: -1px 0 0 15px; font-size: 19.500px; color: #d6d6d6; letter-spacing: -.2px; }
.highlight { width: 78px; height: 39px; margin-left: auto; border-radius: 20px; background: #535353; display: flex; align-items: center; justify-content: center; }
.apps { display: flex; margin: -2px 0 0 3px; }
.app { position: relative; width: 66px; height: 60px; display: flex; align-items: center; justify-content: center; }
.app.focused::before { content: ""; position: absolute; inset: 0 3px; border-radius: 7px; background: #303030; border: 1px solid #383838; }
.ai { width: 36px; height: 36px; position: relative; }
.letter { font: 700 13.500px "Open Sans", sans-serif; fill: #fff; }
.profile { position: absolute; left: 35px; top: 5px; width: 24px; height: 24px; border-radius: 50%; background: #8134cf; }
.status { position: absolute; left: 36px; top: 6px; width: 22px; height: 22px; }
.running { position: absolute; bottom: 1px; left: 28.500px; width: 9px; height: 5px; border-radius: 3px; background: #9a9a9a; }
.focused .running { left: 21px; width: 24px; background: #4cc2ff; }
.tray { flex: 1; display: flex; align-items: center; margin-top: -2px; }
.chev { margin-left: 102.500px; }
.lang, .clock { display: flex; flex-direction: column; font-size: 17.500px; line-height: 23.500px; white-space: nowrap; }
.lang { width: 40px; margin-left: 28px; align-items: center; }
.wifi { margin-left: 25px; }
.vol { margin-left: 11px; }
.batt { margin-left: 11px; }
.clock { width: 94px; margin: -1px 0 0 23.500px; align-items: flex-end; letter-spacing: 0; line-height: 24px; }
.bell { margin-left: 13.500px; }
.copilot { position: relative; margin-left: 27px; }
.copilot span { position: absolute; left: 8px; top: 24px; width: 27px; height: 11px; border-radius: 2px; background: #ffc20e; color: #111; font-weight: 700; font-size: 9.500px; line-height: 11px; letter-spacing: .7px; text-align: center; }
</style>
